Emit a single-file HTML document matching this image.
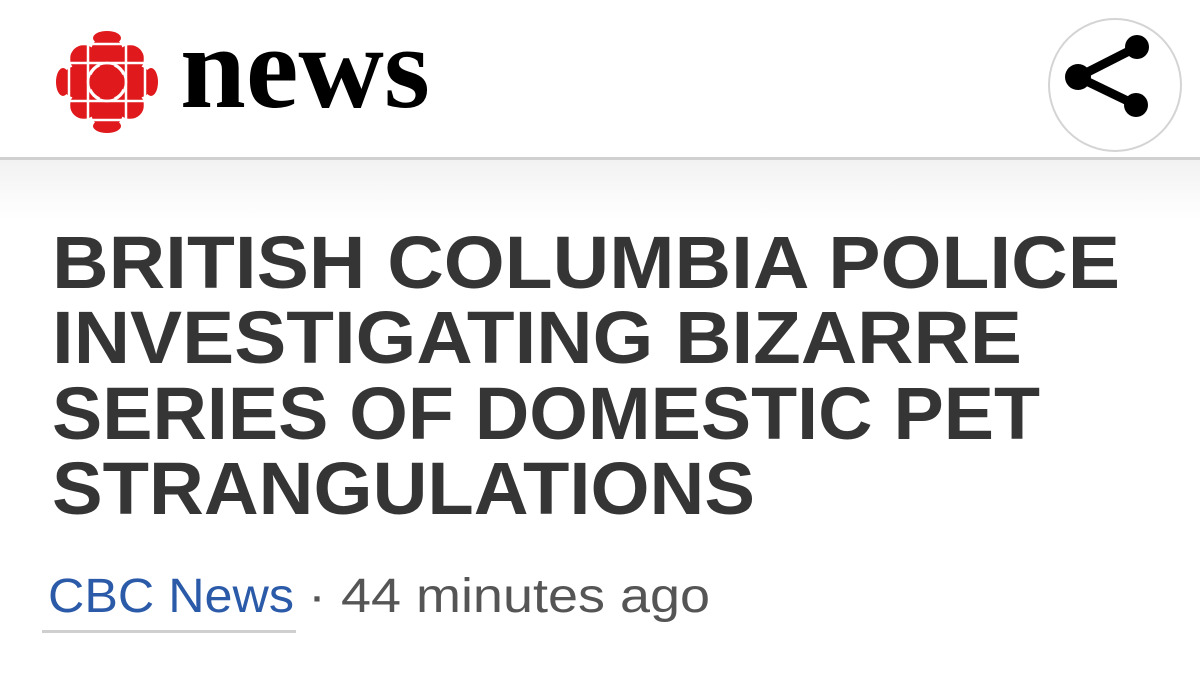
<!DOCTYPE html>
<html><head><meta charset="utf-8"><style>
html,body{margin:0;padding:0;width:1200px;height:682px;overflow:hidden;background:#fff}
.hdr{position:absolute;left:0;top:0;width:1200px;height:157px;background:#fff;border-bottom:3px solid #d0d0d0}
.band{position:absolute;left:0;top:160px;width:1200px;height:60px;background:linear-gradient(#f2f2f2,#fff)}
svg{position:absolute;left:0;top:0}
</style></head><body>
<div class="hdr"></div>
<div class="band"></div>
<svg width="1200" height="682" viewBox="0 0 1200 682">
  <g transform="translate(107,82)" fill="#e0191c">
    <circle r="17"/>
    <circle cx="0" cy="-30" r="16"/><circle cx="0" cy="30" r="16"/>
    <circle cx="-30" cy="0" r="16"/><circle cx="30" cy="0" r="16"/>
    <circle cx="-23" cy="-23" r="14"/><circle cx="23" cy="-23" r="14"/>
    <circle cx="-23" cy="23" r="14"/><circle cx="23" cy="23" r="14"/>
    <ellipse cx="0" cy="-44" rx="14" ry="7"/><ellipse cx="0" cy="44" rx="14" ry="7"/>
    <ellipse cx="-44" cy="0" rx="7" ry="14"/><ellipse cx="44" cy="0" rx="7" ry="14"/>
    <g stroke="#fff" stroke-width="2.5" fill="none">
      <circle r="19"/>
      <line x1="-19" y1="-60" x2="-19" y2="60"/><line x1="19" y1="-60" x2="19" y2="60"/>
      <line x1="-60" y1="-19" x2="60" y2="-19"/><line x1="-60" y1="19" x2="60" y2="19"/>
      <line x1="-60" y1="-38" x2="60" y2="-38"/><line x1="-60" y1="38" x2="60" y2="38"/>
      <line x1="-38" y1="-60" x2="-38" y2="60"/><line x1="38" y1="-60" x2="38" y2="60"/>
    </g>
  </g>
  <text x="180" y="107" font-family="Liberation Serif" font-weight="bold" font-size="118" fill="#000" textLength="250" lengthAdjust="spacingAndGlyphs">news</text>
  <circle cx="1115" cy="85" r="66" fill="#fff" stroke="#d4d4d4" stroke-width="2"/>
  <g fill="#000" stroke="#000" stroke-width="9">
    <line x1="1078" y1="77" x2="1137" y2="47"/><line x1="1078" y1="77" x2="1136" y2="105"/>
    <circle cx="1137" cy="47" r="12" stroke="none"/><circle cx="1078" cy="77" r="13" stroke="none"/><circle cx="1136" cy="105" r="12" stroke="none"/>
  </g>
  <g font-family="Liberation Sans" font-weight="bold" font-size="74" fill="#353535">
    <text x="52" y="288" textLength="1068" lengthAdjust="spacingAndGlyphs">BRITISH COLUMBIA POLICE</text>
    <text x="52" y="363" textLength="970" lengthAdjust="spacingAndGlyphs">INVESTIGATING BIZARRE</text>
    <text x="52" y="439" textLength="988" lengthAdjust="spacingAndGlyphs">SERIES OF DOMESTIC PET</text>
    <text x="52" y="514" textLength="703" lengthAdjust="spacingAndGlyphs">STRANGULATIONS</text>
  </g>
  <g font-family="Liberation Sans" font-size="48">
    <text x="48" y="612" fill="#2a5aa8" textLength="246" lengthAdjust="spacingAndGlyphs">CBC News</text>
    <text x="308" y="612" fill="#555" textLength="402" lengthAdjust="spacingAndGlyphs">· 44 minutes ago</text>
  </g>
  <rect x="42" y="630" width="254" height="3" fill="#cfcfcf"/>
</svg>
</body></html>
